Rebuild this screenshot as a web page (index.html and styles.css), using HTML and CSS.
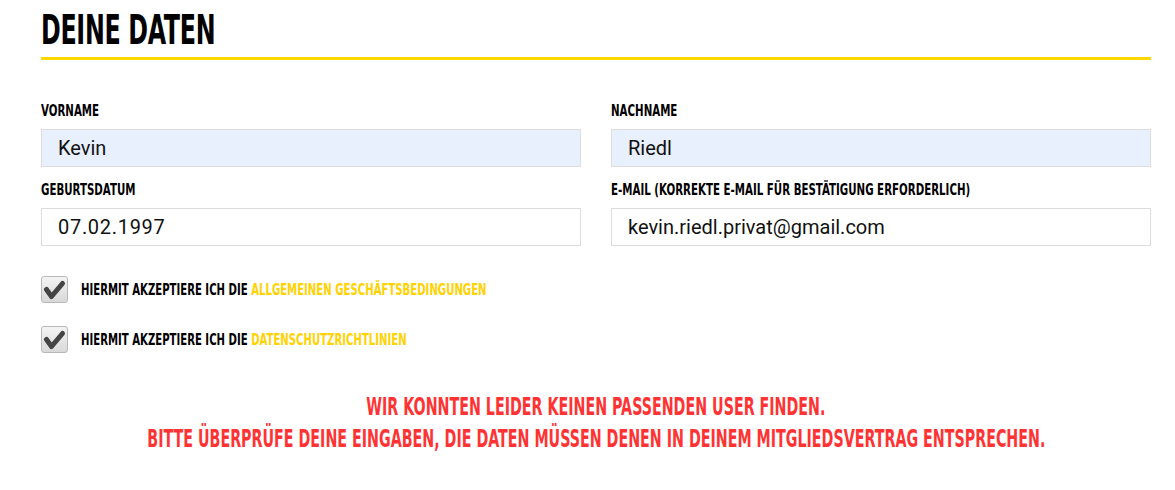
FILE: index.html
```html
<!DOCTYPE html>
<html lang="de">
<head>
<meta charset="utf-8">
<title>Deine Daten</title>
<link rel="stylesheet" href="styles.css">
</head>
<body>
<div class="page">
  <div class="title-bar"><h1 class="title">Deine Daten</h1></div>
  <div class="grid">
    <div class="field">
      <label class="label"><span class="narrow">Vorname</span></label>
      <div class="input autofill">Kevin</div>
    </div>
    <div class="field">
      <label class="label"><span class="narrow">Nachname</span></label>
      <div class="input autofill">Riedl</div>
    </div>
    <div class="field">
      <label class="label"><span class="narrow">Geburtsdatum</span></label>
      <div class="input date">07.02.1997</div>
    </div>
    <div class="field">
      <label class="label"><span class="narrow">E-Mail (korrekte E-Mail für Bestätigung erforderlich)</span></label>
      <div class="input">kevin.riedl.privat@gmail.com</div>
    </div>
  </div>
  <div class="checks">
    <div class="check">
      <span class="box"><svg viewBox="0 0 27 27" width="27" height="27"><path d="M5.5 13.5 L10.5 20.5 L21.5 7.5" fill="none" stroke="#444" stroke-width="5" stroke-linecap="round" stroke-linejoin="round"/></svg></span>
      <span class="check-text narrow">Hiermit akzeptiere ich die <a class="link">allgemeinen Geschäftsbedingungen</a></span>
    </div>
    <div class="check">
      <span class="box"><svg viewBox="0 0 27 27" width="27" height="27"><path d="M5.5 13.5 L10.5 20.5 L21.5 7.5" fill="none" stroke="#444" stroke-width="5" stroke-linecap="round" stroke-linejoin="round"/></svg></span>
      <span class="check-text narrow">Hiermit akzeptiere ich die <a class="link">Datenschutzrichtlinien</a></span>
    </div>
  </div>
  <div class="error">
    <p class="error-line">Wir konnten leider keinen passenden User finden.</p>
    <p class="error-line">Bitte überprüfe deine Eingaben, die Daten müssen denen in deinem Mitgliedsvertrag entsprechen.</p>
  </div>
</div>
</body>
</html>
```
FILE: styles.css
```css
* { box-sizing: border-box; }
body {
  margin: 0;
  background: #fff;
  color: #000;
  font-family: "DejaVu Sans Condensed", "DejaVu Sans", sans-serif;
}
.page {
  width: 1110px;
  margin-left: 41px;
  padding-top: 8px;
}
.narrow {
  display: inline-block;
  white-space: nowrap;
  transform-origin: left center;
}
.title-bar {
  border-bottom: 3px solid #ffd700;
  padding-bottom: 4px;
}
.title {
  display: inline-block;
  margin: 0;
  font-size: 41px;
  line-height: 45px;
  font-weight: 700;
  text-transform: uppercase;
  white-space: nowrap;
  letter-spacing: -0.5px;
  transform: scaleX(0.645);
  transform-origin: left center;
}
.grid {
  display: grid;
  grid-template-columns: 540px 540px;
  column-gap: 30px;
  row-gap: 14px;
  margin-top: 42px;
}
.field { display: flex; flex-direction: column; }
.label {
  font-size: 15px;
  line-height: 18px;
  font-weight: 700;
  text-transform: uppercase;
  margin-bottom: 9px;
}
.label .narrow { transform: scaleX(0.76); }
.input {
  height: 38px;
  border: 1px solid #dddddd;
  padding: 0 16px;
  font-family: Roboto, "Liberation Sans", sans-serif;
  font-size: 20px;
  line-height: 36px;
  color: #111;
  background: #fff;
}
.input.date { letter-spacing: 0.7px; }
.input.autofill { background: #e8f0fe; }
.checks {
  margin-top: 30px;
  display: flex;
  flex-direction: column;
  gap: 23px;
}
.check { display: flex; align-items: center; gap: 13px; }
.box {
  flex: none;
  width: 27px;
  height: 27px;
  border: 1px solid #b8b8b8;
  border-radius: 3px;
  background: linear-gradient(#f4f4f4, #d8d8d8);
  position: relative;
}
.box svg { display: block; position: absolute; left: -1px; top: -1px; }
.check-text {
  font-size: 15px;
  font-weight: 700;
  text-transform: uppercase;
  transform: scaleX(0.75);
}
.link { color: #ffd200; }
.error {
  margin-top: 38px;
  display: flex;
  flex-direction: column;
  align-items: center;
  color: #ff3333;
  font-weight: 700;
  text-transform: uppercase;
  font-size: 24px;
  line-height: 32px;
}
.error-line {
  margin: 0;
  white-space: nowrap;
  transform: scaleX(0.66);
  transform-origin: center center;
}
```
